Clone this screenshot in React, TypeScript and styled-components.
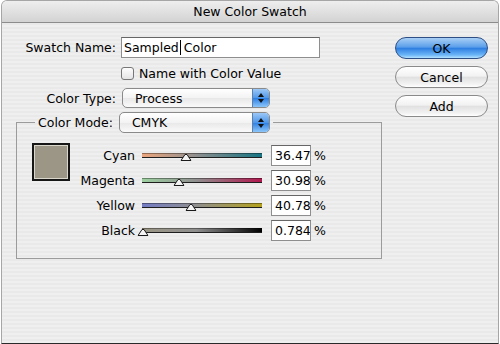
import styled, {createGlobalStyle} from "styled-components";

const GlobalStyle = createGlobalStyle`
    body {
        margin: 0;
        background: #fff;
        font-family: "DejaVu Sans", "Liberation Sans", sans-serif;
        color: #000;
    }
`

const Window = styled.div`
    box-sizing: border-box;
    width: 498px;
    height: 344px;
    margin-left: 1px;
    border: 1px solid #a6a6a6;
    border-bottom: 1px solid #2a2a2a;
    border-radius: 6px 6px 0 0;
    overflow: hidden;
    background: repeating-linear-gradient(#efefef 0 2px, #e9e9e9 2px 4px);
    display: flex;
    flex-direction: column;
`

const TitleBar = styled.div`
    height: 21px;
    line-height: 21px;
    text-align: center;
    font-size: 12.5px;
    background: linear-gradient(#eeeeee, #d3d3d3);
    border-bottom: 1px solid #8c8c8c;
`

const Body = styled.div`
    display: flex;
    padding-top: 14px;
`

const Main = styled.div`
    width: 393px;
    display: flex;
    flex-direction: column;
`

const FormGrid = styled.div`
    display: grid;
    grid-template-columns: 114px auto;
    grid-template-rows: 21px 14px 20px;
    column-gap: 5px;
    row-gap: 8px;
    align-items: center;
`

const Label = styled.span`
    font-size: 12.5px;
    text-align: right;
    white-space: nowrap;
`

const TextField = styled.div`
    box-sizing: border-box;
    width: 199px;
    height: 21px;
    border: 1px solid #8e8e8e;
    border-top-color: #666;
    background: #fff;
    font-size: 12.5px;
    line-height: 19px;
    padding-left: 2px;
    display: flex;
    align-items: center;
`

const Caret = styled.span`
    display: inline-block;
    width: 1px;
    height: 15px;
    background: #000;
    margin: 0 3px 0 1px;
`

const CheckRow = styled.label`
    display: flex;
    align-items: center;
    gap: 5px;
    font-size: 12.5px;
`

const CheckBox = styled.span`
    box-sizing: border-box;
    width: 13px;
    height: 13px;
    border: 1px solid #777;
    border-radius: 3px;
    background: linear-gradient(#fdfdfd, #e4e4e4);
`

const Popup = styled.div<{ $w: number, $h: number }>`
    box-sizing: border-box;
    width: ${p => p.$w}px;
    height: ${p => p.$h}px;
    border: 1px solid #8a8a8a;
    border-radius: 5px;
    background: linear-gradient(#ffffff 0%, #f3f3f3 50%, #e8e8e8 51%, #fafafa 100%);
    display: flex;
    align-items: center;
    overflow: hidden;
    font-size: 12.5px;
`

const PopupText = styled.span`
    flex: 1;
    padding-left: 12px;
`

const PopupArrows = styled.span`
    align-self: stretch;
    width: 16px;
    background: linear-gradient(#9cc8f6 0%, #4f97e9 50%, #2c7ee2 51%, #8cc6fa 100%);
    border-left: 1px solid #5c7fae;
    display: flex;
    flex-direction: column;
    align-items: center;
    justify-content: center;
    gap: 2px;

    svg {
        display: block;
    }
`

const Group = styled.fieldset`
    box-sizing: border-box;
    margin: 4px 0 0 14px;
    padding: 0;
    width: 366px;
    height: 147px;
    border: 1px solid #9b9b9b;
    min-width: 0;
`

const Legend = styled.legend`
    margin-left: 18px;
    padding: 0 3px;
    display: flex;
    align-items: center;
    gap: 6px;
    font-size: 12.5px;
`

const GroupInner = styled.div`
    display: flex;
    padding: 10px 0 0 15px;
`

const Swatch = styled.div`
    box-sizing: border-box;
    width: 38px;
    height: 38px;
    border: 2px solid #161616;
    box-shadow: inset 0 0 0 1px #d9d6cb;
    background: #9b9685;
`

const Sliders = styled.div`
    display: grid;
    grid-template-columns: 60px 136px 43px auto;
    grid-auto-rows: 21px;
    row-gap: 4px;
    margin: 2px 0 0 5px;
    align-items: center;
`

const Track = styled.div<{ $from: string, $to: string }>`
    position: relative;
    margin-left: 7px;
    width: 120px;
    height: 3px;
    border-top: 1px solid rgba(0, 0, 0, 0.35);
    border-bottom: 1px solid #1e1e1e;
    background: linear-gradient(to right, ${p => p.$from}, #8f8f8f 45%, ${p => p.$to});
`

const Thumb = styled.svg`
    position: absolute;
    bottom: -4px;
    transform: translateX(-50%);
`

const ValueBox = styled.div`
    box-sizing: border-box;
    width: 40px;
    height: 21px;
    border: 1px solid #8e8e8e;
    border-top-color: #666;
    background: #fff;
    font-size: 12.5px;
    line-height: 19px;
    padding-left: 3px;
    white-space: nowrap;
    overflow: hidden;
`

const Percent = styled.span`
    font-size: 12.5px;
`

const Buttons = styled.div`
    display: flex;
    flex-direction: column;
    gap: 7px;
`

const Button = styled.div<{ $primary?: boolean }>`
    box-sizing: border-box;
    width: 93px;
    height: 22px;
    border-radius: 11px;
    border: 1px solid ${p => p.$primary ? "#2d4f86" : "#8a8a8a"};
    background: ${p => p.$primary
            ? "linear-gradient(#a9cff5 0%, #5b9fea 45%, #2f7fe0 52%, #6cb5f7 85%, #b4e2ff 100%)"
            : "linear-gradient(#ffffff 0%, #f2f2f2 45%, #e1e1e1 52%, #f2f2f2 85%, #ffffff 100%)"};
    font-size: 12.5px;
    display: flex;
    align-items: center;
    justify-content: center;
`

const sliders = [
    {name: "Cyan", value: 36.47, text: "36.47", from: "#eba57c", to: "#167482"},
    {name: "Magenta", value: 30.98, text: "30.98", from: "#9dd0a0", to: "#b0174d"},
    {name: "Yellow", value: 40.78, text: "40.78", from: "#737cc4", to: "#b4a11c"},
    {name: "Black", value: 0.784, text: "0.784", from: "#9b9685", to: "#000000"},
]

function Arrows() {
    return <PopupArrows>
        <svg width="6" height="4" viewBox="0 0 6 4"><polygon points="0,4 3,0 6,4" fill="#111"/></svg>
        <svg width="6" height="4" viewBox="0 0 6 4"><polygon points="0,0 6,0 3,4" fill="#111"/></svg>
    </PopupArrows>
}

export default function App() {
    return <>
        <GlobalStyle/>
        <Window>
            <TitleBar>New Color Swatch</TitleBar>
            <Body>
                <Main>
                    <FormGrid>
                        <Label>Swatch Name:</Label>
                        <TextField>Sampled<Caret/>Color</TextField>
                        <span/>
                        <CheckRow><CheckBox/>Name with Color Value</CheckRow>
                        <Label>Color Type:</Label>
                        <div style={{marginLeft: 1}}>
                            <Popup $w={148} $h={20}><PopupText>Process</PopupText><Arrows/></Popup>
                        </div>
                    </FormGrid>
                    <Group>
                        <Legend>
                            <span>Color Mode:</span>
                            <Popup $w={151} $h={21}><PopupText>CMYK</PopupText><Arrows/></Popup>
                        </Legend>
                        <GroupInner>
                            <Swatch/>
                            <Sliders>
                                {sliders.map(s => [
                                    <Label key={s.name + "l"}>{s.name}</Label>,
                                    <Track key={s.name + "t"} $from={s.from} $to={s.to}>
                                        <Thumb width="11" height="8" viewBox="0 0 11 8" style={{left: `${s.value}%`}}>
                                            <polygon points="0.5,7.5 4.5,1.5 6.5,1.5 10.5,7.5" fill="#f4f4f4" stroke="#1a1a1a"/>
                                        </Thumb>
                                    </Track>,
                                    <ValueBox key={s.name + "v"}>{s.text}</ValueBox>,
                                    <Percent key={s.name + "p"}>%</Percent>,
                                ])}
                            </Sliders>
                        </GroupInner>
                    </Group>
                </Main>
                <Buttons>
                    <Button $primary>OK</Button>
                    <Button>Cancel</Button>
                    <Button>Add</Button>
                </Buttons>
            </Body>
        </Window>
    </>
}
